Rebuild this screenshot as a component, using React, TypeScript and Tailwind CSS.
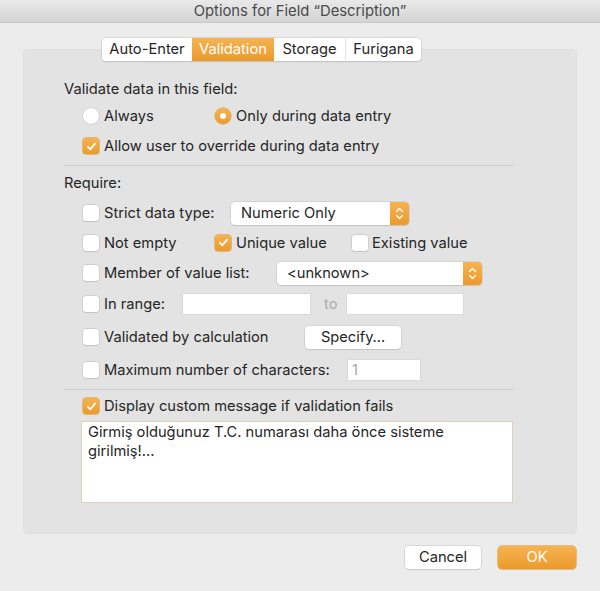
import React from "react";

const font = { fontFamily: "Inter, 'Noto Sans', sans-serif" };

function Check({ checked = false }: { checked?: boolean }) {
  return checked ? (
    <span className="flex h-[16px] w-[16px] shrink-0 items-center justify-center rounded-[3px] bg-gradient-to-b from-[#f5b350] to-[#ec9a2a] shadow-[0_0_0_0.5px_#d98b1f]">
      <svg width="11" height="11" viewBox="0 0 11 11">
        <polyline points="2,5.8 4.4,8.3 9,2.6" fill="none" stroke="#fff" strokeWidth="1.8" strokeLinecap="round" strokeLinejoin="round" />
      </svg>
    </span>
  ) : (
    <span className="h-[16px] w-[16px] shrink-0 rounded-[3px] bg-white shadow-[0_0_0_0.5px_#bdbdbd,0_0.5px_1px_rgba(0,0,0,0.12)]" />
  );
}

function Radio({ checked = false }: { checked?: boolean }) {
  return checked ? (
    <span className="flex h-[16px] w-[16px] shrink-0 items-center justify-center rounded-full bg-gradient-to-b from-[#f5b350] to-[#ec9a2a] shadow-[0_0_0_0.5px_#d98b1f]">
      <span className="h-[6px] w-[6px] rounded-full bg-white" />
    </span>
  ) : (
    <span className="h-[16px] w-[16px] shrink-0 rounded-full bg-white shadow-[0_0_0_0.5px_#c4c4c4,0_0.5px_1px_rgba(0,0,0,0.12)]" />
  );
}

function Popup({ label, width }: { label: string; width: string }) {
  return (
    <div className={`flex h-[23px] ${width} items-stretch rounded-[4px] bg-white shadow-[0_0_0_0.5px_#c4c4c4,0_1px_1px_rgba(0,0,0,0.12)]`}>
      <span className="flex flex-1 items-center pl-[10px] text-[#262626]">{label}</span>
      <span className="flex w-[19px] items-center justify-center rounded-r-[4px] bg-gradient-to-b from-[#f5b350] to-[#ec9a2a]">
        <svg width="9" height="15" viewBox="0 0 9 15">
          <polyline points="1.5,5.5 4.5,2.5 7.5,5.5" fill="none" stroke="#fff" strokeWidth="1.4" strokeLinecap="round" strokeLinejoin="round" />
          <polyline points="1.5,9.5 4.5,12.5 7.5,9.5" fill="none" stroke="#fff" strokeWidth="1.4" strokeLinecap="round" strokeLinejoin="round" />
        </svg>
      </span>
    </div>
  );
}

function Field({ width, value }: { width: string; value?: string }) {
  return (
    <div className={`flex h-[20px] ${width} items-center bg-white pl-[4px] text-[#a8a8a8] shadow-[0_0_0_0.5px_#d0d0d0]`}>
      {value}
    </div>
  );
}

const tabs = ["Auto-Enter", "Validation", "Storage", "Furigana"];
const tabWidths = ["w-[90px]", "w-[82px]", "w-[71px]", "w-[76px]"];

export default function App() {
  return (
    <div className="flex h-[591px] w-[600px] flex-col bg-[#ececec] text-[14.7px] text-[#262626]" style={font}>
      <div className="flex h-[23px] shrink-0 items-center justify-center border-b border-[#c9c9c9] bg-gradient-to-b from-[#e9e9e9] to-[#d4d4d4] text-[14.8px] text-[#4a4a4a]">
        Options for Field “Description”
      </div>

      <div className="flex flex-1 flex-col px-[23px] pt-[15px]">
        <div className="relative z-10 flex self-center">
          <div className="mr-[77px] flex h-[23px] overflow-hidden rounded-[4px] bg-white shadow-[0_0_0_0.5px_#c6c6c6,0_1px_1.5px_rgba(0,0,0,0.15)]">
            {tabs.map((t, i) => (
              <div
                key={t}
                className={`flex ${tabWidths[i]} items-center justify-center ${
                  i === 1
                    ? "bg-gradient-to-b from-[#f5b350] to-[#ec9a2a] text-white"
                    : "text-[#262626]"
                } ${i === 3 ? "border-l border-[#e2e2e2]" : ""}`}
              >
                {t}
              </div>
            ))}
          </div>
        </div>

        <div className="-mt-[12px] flex w-[554px] flex-col rounded-[5px] bg-[#e3e3e3] pb-[31px] pl-[41px] pt-[28px] shadow-[inset_0_0_0_0.5px_#dadada]">
          <div className="flex h-[24px] items-center">Validate data in this field:</div>

          <div className="mt-[3px] flex h-[24px] items-center pl-[19px]">
            <div className="flex w-[132px] items-center gap-[5px]">
              <Radio />
              <span>Always</span>
            </div>
            <div className="flex items-center gap-[5px]">
              <Radio checked />
              <span>Only during data entry</span>
            </div>
          </div>

          <div className="mt-[6px] flex h-[24px] items-center gap-[5px] pl-[19px]">
            <Check checked />
            <span>Allow user to override during data entry</span>
          </div>

          <div className="mt-[7px] h-px w-[450px] bg-[#cfcfcf]" />

          <div className="mt-[5px] flex h-[24px] items-center">Require:</div>

          <div className="mt-[6px] flex h-[24px] items-center pl-[19px]">
            <div className="flex w-[148px] items-center gap-[5px]">
              <Check />
              <span>Strict data type:</span>
            </div>
            <Popup label="Numeric Only" width="w-[178px]" />
          </div>

          <div className="mt-[6px] flex h-[24px] items-center pl-[19px]">
            <div className="flex w-[132px] items-center gap-[5px]">
              <Check />
              <span>Not empty</span>
            </div>
            <div className="flex w-[137px] items-center gap-[5px]">
              <Check checked />
              <span>Unique value</span>
            </div>
            <div className="flex items-center gap-[4px]">
              <Check />
              <span>Existing value</span>
            </div>
          </div>

          <div className="mt-[6px] flex h-[24px] items-center pl-[19px]">
            <div className="flex w-[194px] items-center gap-[5px]">
              <Check />
              <span>Member of value list:</span>
            </div>
            <Popup label="<unknown>" width="w-[205px]" />
          </div>

          <div className="mt-[7px] flex h-[24px] items-center pl-[19px]">
            <div className="flex w-[100px] items-center gap-[5px]">
              <Check />
              <span>In range:</span>
            </div>
            <Field width="w-[127px]" />
            <span className="w-[37px] pl-[14px] text-[#acacac]">to</span>
            <Field width="w-[116px]" />
          </div>

          <div className="mt-[9px] flex h-[24px] items-center pl-[19px]">
            <div className="flex w-[222px] items-center gap-[5px]">
              <Check />
              <span>Validated by calculation</span>
            </div>
            <div className="flex h-[23px] w-[96px] items-center justify-center rounded-[4px] bg-white shadow-[0_0_0_0.5px_#c4c4c4,0_1px_1px_rgba(0,0,0,0.12)]">
              Specify…
            </div>
          </div>

          <div className="mt-[9px] flex h-[24px] items-center pl-[19px]">
            <div className="flex w-[265px] items-center gap-[5px]">
              <Check />
              <span>Maximum number of characters:</span>
            </div>
            <Field width="w-[72px]" value="1" />
          </div>

          <div className="mt-[7px] h-px w-[450px] bg-[#cfcfcf]" />

          <div className="mt-[4px] flex h-[24px] items-center gap-[5px] pl-[19px]">
            <Check checked />
            <span>Display custom message if validation fails</span>
          </div>

          <div className="ml-[17px] mt-[3px] h-[82px] w-[432px] border border-[#dcd2bc] bg-white px-[6px] pt-[1px] leading-[19px] text-[#262626]">
            Girmiş olduğunuz T.C. numarası daha önce sisteme
            <br />
            girilmiş!...
          </div>
        </div>

        <div className="mt-[12px] flex justify-end gap-[17px] pr-[1px]">
          <div className="flex h-[23px] w-[76px] items-center justify-center rounded-[4px] bg-white shadow-[0_0_0_0.5px_#c4c4c4,0_1px_1px_rgba(0,0,0,0.12)]">
            Cancel
          </div>
          <div className="flex h-[23px] w-[78px] items-center justify-center rounded-[4px] bg-gradient-to-b from-[#f5b350] to-[#ec9a2a] text-white shadow-[0_0_0_0.5px_#d98b1f]">
            OK
          </div>
        </div>
      </div>
    </div>
  );
}
